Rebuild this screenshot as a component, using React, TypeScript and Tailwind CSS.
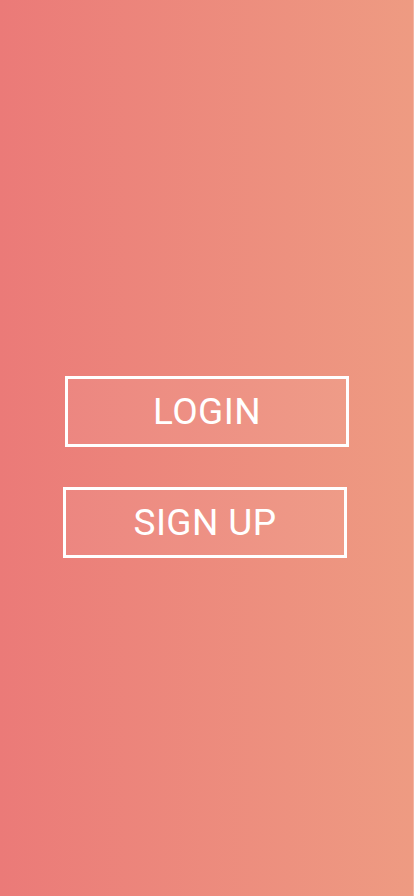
import React from 'react';

const App: React.FC = () => {
  return (
    <div className="w-[414px] h-[896px] bg-[linear-gradient(to_right,#eb7a78,#ee9b82)] border-r border-[#f3b3a2] flex flex-col pt-[376px] font-['Roboto',sans-serif]">
      <button className="ml-[65px] w-[284px] h-[71px] border-[3px] border-white bg-white/[0.06] text-white text-[37px] tracking-[0.4px] leading-none flex items-center justify-center">
        LOGIN
      </button>
      <button className="ml-[63px] mt-[40px] w-[284px] h-[71px] border-[3px] border-white bg-white/[0.06] text-white text-[37px] tracking-[0.4px] leading-none flex items-center justify-center">
        SIGN UP
      </button>
    </div>
  );
};

export default App;
